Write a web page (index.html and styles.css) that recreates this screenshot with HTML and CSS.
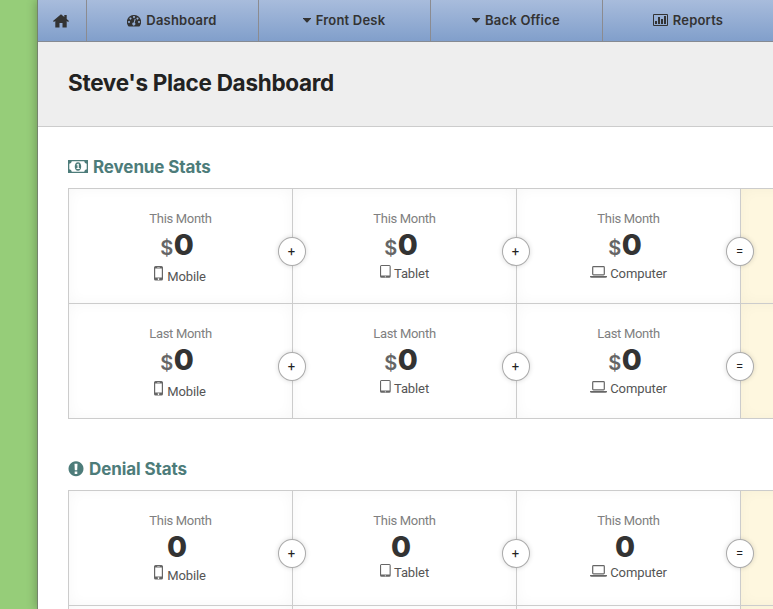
FILE: index.html
```html
<!DOCTYPE html>
<html lang="en">
<head>
<meta charset="utf-8">
<title>Steve's Place Dashboard</title>
<link rel="stylesheet" href="styles.css">
</head>
<body>
<svg class="defs" aria-hidden="true">
  <symbol id="mobile" viewBox="0 0 10 15"><path fill-rule="evenodd" d="M2 0h5.400q1.600 0 1.600 1.600v11.400q0 1.500-1.600 1.500H1.600Q0 14.500 0 13V1.600Q0 0 1.600 0zM1.200 2.500v9h6.600v-9zM3.200 1v.6h2.600V1zM4.500 12.300a.8.8 0 1 0 .01 0z"/></symbol>
  <symbol id="tablet" viewBox="0 0 11 13"><path fill-rule="evenodd" d="M1.500 0h7.700q1.500 0 1.500 1.500v9.700q0 1.500-1.500 1.500H1.500Q0 12.700 0 11.200V1.500Q0 0 1.500 0zM1.100 1.100v9.400h8.500V1.100zM5.300 11.200a.5.5 0 1 0 .01 0z"/></symbol>
  <symbol id="computer" viewBox="0 0 17 12"><path fill-rule="evenodd" d="M3.500 0h10q1.400 0 1.400 1.400v6.700q0 1.300-1.400 1.300h-10Q2.100 9.400 2.100 8.100V1.400Q2.100 0 3.500 0zM3.300 1.200v7h10.400v-7zM0 10h17v.6q0 1.200-1.500 1.200h-14Q0 11.800 0 10.600z"/></symbol>
</svg>
<div class="page">
  <nav class="nav">
    <a class="home"><svg width="16" height="14" viewBox="0 0 16 14"><path d="M8 .2L0 7l.9 1L2.300 6.900V13.500H6.500V9h3v4.500h4.200V6.900L15.100 8l.9-1-2.300-2V1h-2.400v2z"/></svg></a>
    <a><svg class="gauge" width="14" height="12" viewBox="0 0 14 12"><path fill-rule="evenodd" d="M7 0a7 7 0 0 1 6 10.800q-.3.600-.9.600H1.900q-.6 0-.9-.6A7 7 0 0 1 7 0zM7 1.100a.95.95 0 1 0 .01 0zM3.500 2.500a.95.950 0 1 0 .01 0zM10.500 2.500a.95.950 0 1 0 .01 0zM2 6a.95.950 0 1 0 .01 0zM12 6a.95.950 0 1 0 .01 0zM7.700 3.800L6.700 7.500a1.500 1.500 0 1 0 1 .3l1-3.700z"/></svg><span>Dashboard</span></a>
    <a><svg class="caret" width="8" height="5" viewBox="0 0 8 5"><path d="M0 0h8v.6L4.400 4.500h-.8L0 .6z"/></svg><span>Front Desk</span></a>
    <a><svg class="caret" width="8" height="5" viewBox="0 0 8 5"><path d="M0 0h8v.6L4.400 4.500h-.8L0 .6z"/></svg><span>Back Office</span></a>
    <a><svg class="chart" width="15" height="12" viewBox="0 0 15 12"><path fill-rule="evenodd" d="M1 0h13q1 0 1 1v10q0 1-1 1H1q-1 0-1-1V1q0-1 1-1zM1 1v10h13V1zM2 7h2v3H2zM5 3h2v7H5zM8 5h2v5H8zM11 2h2v8h-2z"/></svg><span>Reports</span></a>
  </nav>
  <header class="head"><h1>Steve's Place Dashboard</h1></header>
  <main class="main">
    <section>
      <h2><svg class="money" width="20" height="13" viewBox="0 0 20 13"><path fill-rule="evenodd" d="M0 0h20v13H0zM3.800 1.300Q3.500 3.500 1.300 3.800v5.400q2.200.3 2.500 2.500h12.400q.3-2.200 2.500-2.500V3.800Q16.500 3.500 16.200 1.300z"/><path fill-rule="evenodd" d="M10 2.200c4.300 0 4.300 8.600 0 8.600s-4.300-8.600 0-8.600zM8.400 4.700l.6.700.5-.4v3h-1v1h3.200V8h-.9V3.700h-1z"/></svg><span>Revenue Stats</span></h2>
      <div class="grid">
        <div class="cell"><p class="when">This Month</p><p class="num"><small>$</small>0</p><p class="dev m"><svg width="10" height="15"><use href="#mobile"/></svg><span>Mobile</span></p><b class="op">+</b></div>
        <div class="cell"><p class="when">This Month</p><p class="num"><small>$</small>0</p><p class="dev t"><svg width="11" height="13"><use href="#tablet"/></svg><span>Tablet</span></p><b class="op">+</b></div>
        <div class="cell"><p class="when">This Month</p><p class="num"><small>$</small>0</p><p class="dev c"><svg width="17" height="12"><use href="#computer"/></svg><span>Computer</span></p><b class="op">=</b></div>
        <div class="cell total"></div>
        <div class="cell"><p class="when">Last Month</p><p class="num"><small>$</small>0</p><p class="dev m"><svg width="10" height="15"><use href="#mobile"/></svg><span>Mobile</span></p><b class="op">+</b></div>
        <div class="cell"><p class="when">Last Month</p><p class="num"><small>$</small>0</p><p class="dev t"><svg width="11" height="13"><use href="#tablet"/></svg><span>Tablet</span></p><b class="op">+</b></div>
        <div class="cell"><p class="when">Last Month</p><p class="num"><small>$</small>0</p><p class="dev c"><svg width="17" height="12"><use href="#computer"/></svg><span>Computer</span></p><b class="op">=</b></div>
        <div class="cell total"></div>
      </div>
    </section>
    <section class="denial">
      <h2><svg class="alert" width="16" height="16" viewBox="0 0 16 16"><path fill-rule="evenodd" d="M8 .3a7.500 7.500 0 1 0 .01 0zM6.500 2.700h3L9.200 9.300H6.800zM6.700 10.500h2.600v2.500H6.700z"/></svg><span>Denial Stats</span></h2>
      <div class="grid">
        <div class="cell"><p class="when">This Month</p><p class="num">0</p><p class="dev m"><svg width="10" height="15"><use href="#mobile"/></svg><span>Mobile</span></p><b class="op">+</b></div>
        <div class="cell"><p class="when">This Month</p><p class="num">0</p><p class="dev t"><svg width="11" height="13"><use href="#tablet"/></svg><span>Tablet</span></p><b class="op">+</b></div>
        <div class="cell"><p class="when">This Month</p><p class="num">0</p><p class="dev c"><svg width="17" height="12"><use href="#computer"/></svg><span>Computer</span></p><b class="op">=</b></div>
        <div class="cell total"></div>
        <div class="cell"></div><div class="cell"></div><div class="cell"></div><div class="cell total"></div>
      </div>
    </section>
  </main>
</div>
</body>
</html>
```
FILE: styles.css
```css
* { box-sizing: border-box; }
html, body { margin: 0; height: 100%; overflow: hidden; }
body { background: #96cd79; font-family: Roboto, "Liberation Sans", sans-serif; font-size: 13px; color: #333; }
h1, h2, p { margin: 0; }
svg { display: block; fill: currentColor; flex: none; }
.defs { display: none; }
.page { margin-left: 37px; height: 100%; overflow: hidden; background: #fff; border-left: 1px solid #75836c; box-shadow: 0 0 10px rgba(0, 0, 0, .3); }
.nav { display: flex; height: 42px; border-bottom: 1px solid #858a92; background: linear-gradient(#a8bcdc, #819fcb); }
.nav a { display: flex; align-items: center; justify-content: center; flex: none; width: 172px; border-right: 1px solid #8b8b90; font: 600 13px/20px Inter, sans-serif; letter-spacing: .2px; padding: 0 1px 1px 0; }
.nav a.home { width: 49px; padding: 1px 2px 0 0; }
.nav a span { margin-left: 5px; }
.nav .gauge { margin-top: 1px; }
.head { height: 85px; background: #eee; border-bottom: 1px solid #ccc; padding: 26px 0 0 30px; }
h1 { font: 700 22.5px/30px Inter, sans-serif; color: #222; letter-spacing: -.3px; }
.main { padding: 30px 0 0 30px; }
h2 { display: flex; align-items: center; height: 20px; margin-bottom: 11px; font: 700 17px/20px Inter, sans-serif; letter-spacing: -.1px; color: #4d7c7a; }
h2 span { margin-left: 5px; }
.money { margin-bottom: 1px; }
.denial { margin-top: 40px; }
.grid { display: grid; grid-template-columns: repeat(4, 224px); grid-auto-rows: 115px; width: 897px; border-top: 1px solid #ccc; border-left: 1px solid #ccc; }
.cell { position: relative; border-right: 1px solid #ccc; border-bottom: 1px solid #ccc; padding-top: 21px; text-align: center; box-shadow: inset 0 0 14px rgba(0, 0, 0, .035); }
.total { background: #fef7df; }
.when { line-height: 18px; letter-spacing: -.3px; color: #808080; }
.num { height: 34px; margin-right: 7px; font: 800 29px/34px Inter, sans-serif; color: #333; }
.num small { font-size: 20px; font-weight: 600; color: #666; margin-right: 1px; letter-spacing: -.5px; }
.dev { display: flex; justify-content: center; line-height: 18px; color: #555; letter-spacing: -.1px; }
.dev svg { color: #666; margin-right: 3px; }
.dev span { margin-top: 3px; }
.dev.m span { margin-top: 6px; }
.dev.m { margin-right: 1px; }
.dev.m svg { margin-top: 4px; }
.dev.t svg { margin-top: 3px; }
.dev.c svg { margin-top: 4px; }
.denial .num { height: 31px; }
.op { position: absolute; z-index: 1; right: -14px; top: 48px; width: 28px; height: 29px; border: 1px solid #aaa; border-radius: 50%; background: #fff; box-shadow: 0 0 5px rgba(0, 0, 0, .15); font: 400 13px/27px Roboto, sans-serif; color: #222; padding-right: 1px; }
```
